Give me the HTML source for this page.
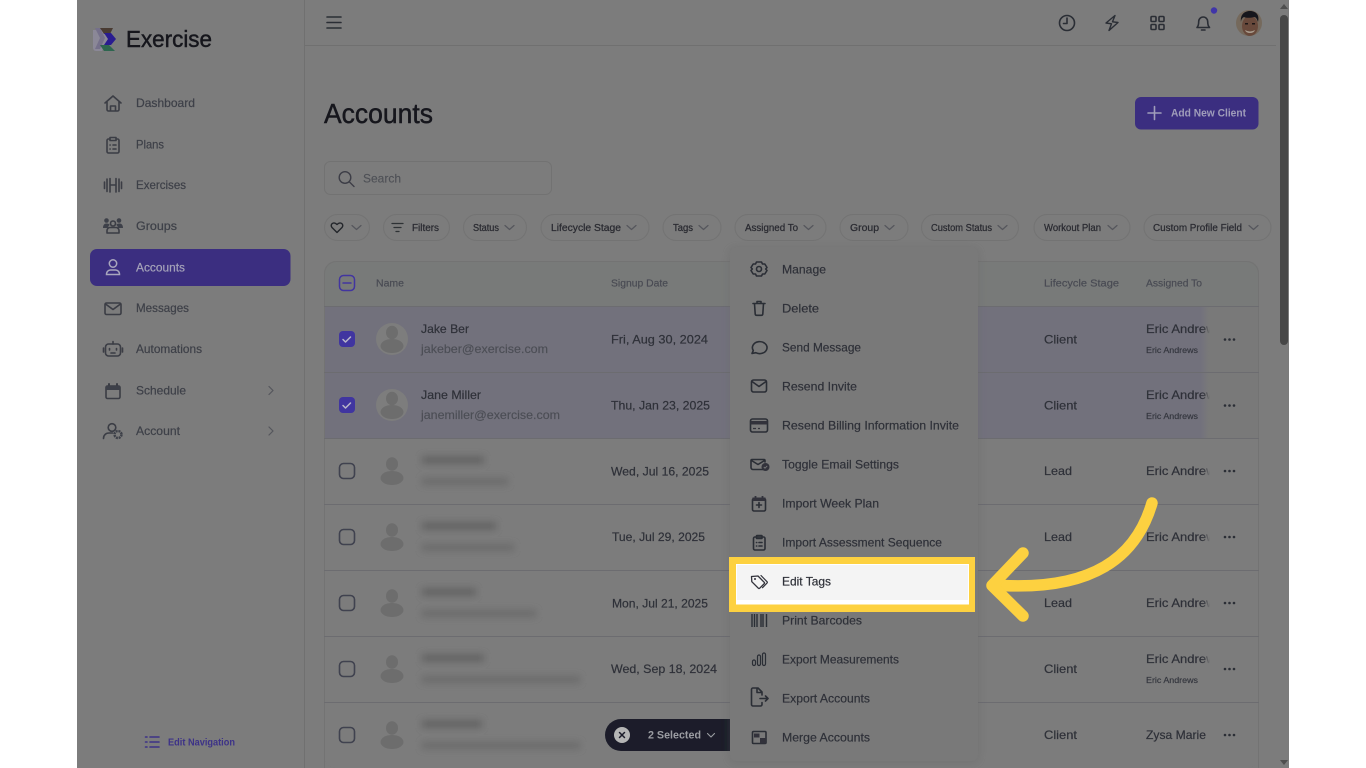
<!DOCTYPE html>
<html lang="en"><head><meta charset="utf-8"><title>Accounts</title>
<style>
html,body{margin:0;padding:0;background:#fff;width:1366px;height:768px;overflow:hidden}
svg{display:block;position:absolute;left:0;top:0}
text{font-family:"Liberation Sans",sans-serif}
.nav{font-size:12px;fill:#3e4048;stroke:#3e4048;stroke-width:.2}
.m{font-size:12px;fill:#2e3038;stroke:#2e3038;stroke-width:.2}
.c{font-size:10px;fill:#2a2b31;stroke:#2a2b31;stroke-width:.25}
.h{font-size:10.5px;fill:#494b53;stroke:#494b53;stroke-width:.2}
.t{font-size:12px;fill:#2e3038;stroke:#2e3038;stroke-width:.2}
.e{font-size:12px;fill:#4c4e55;stroke:#4c4e55;stroke-width:.15}
.s{font-size:8.5px;fill:#33353d;stroke:#33353d;stroke-width:.15}
.i{fill:none;stroke:#2b2d35;stroke-width:1.6;stroke-linecap:round;stroke-linejoin:round}
.n{fill:none;stroke:#3a3c44;stroke-width:1.6;stroke-linecap:round;stroke-linejoin:round}
.g{fill:none;stroke:#55565c;stroke-width:1.2;stroke-linecap:round;stroke-linejoin:round}
.chip{fill:#7b7b7b;stroke:#737373;stroke-width:1}
.sep{stroke:#707070;stroke-width:1}
.cb{fill:none;stroke:#3f424f;stroke-width:1.6}
.av{fill:#7d7d7d}
.p{fill:#6d6d6d}
</style></head>
<body>
<svg width="1366" height="768" viewBox="0 0 1366 768" xmlns="http://www.w3.org/2000/svg">
<defs>
<filter id="soft" x="-2%" y="-2%" width="104%" height="104%"><feGaussianBlur stdDeviation="0.35"/></filter>
<filter id="bl" x="-20%" y="-100%" width="140%" height="300%"><feGaussianBlur stdDeviation="3.5"/></filter>
<filter id="sh" x="-10%" y="-10%" width="120%" height="120%"><feGaussianBlur stdDeviation="4"/></filter>
<linearGradient id="fadeS" x1="0" x2="1" y1="0" y2="0"><stop offset="0" stop-color="#797979" stop-opacity="0"/><stop offset="1" stop-color="#797979"/></linearGradient>
<linearGradient id="fadeN" x1="0" x2="1" y1="0" y2="0"><stop offset="0" stop-color="#7b7b7b" stop-opacity="0"/><stop offset="1" stop-color="#7b7b7b"/></linearGradient>
<clipPath id="tb"><rect x="324" y="261" width="935" height="507" rx="12"/></clipPath>
<clipPath id="ac"><circle cx="1249" cy="23" r="13"/></clipPath>
</defs>
<rect width="1366" height="768" fill="#fff"/>
<g filter="url(#soft)">
<rect x="77" y="0" width="1212" height="768" fill="#7b7b7b"/>
<rect x="304" y="0" width="1" height="768" fill="#707070"/>
<rect x="305" y="45" width="971" height="1" fill="#707070"/>

<!-- scrollbar -->
<rect x="1276" y="0" width="13" height="768" fill="#7c7c7c"/>
<rect x="1280" y="15" width="8" height="330" rx="4" fill="#474747"/>
<path d="M1280 9l4-5 4 5z" fill="#4f4f4f"/>
<path d="M1280 760l4 5 4-5z" fill="#4f4f4f"/>

<!-- logo -->
<g>
<path d="M93 30h9l6 9-6 12h-6a3 3 0 0 1-3-3z" fill="#8b8897"/>
<path d="M95 28h5l5 10-5 11h-5l5-11z" fill="#74708a"/>
<path d="M100 28h13l-3 6h-6z" fill="#4a3a33"/>
<path d="M104 33h7l5 6-5 6h-7l4-6z" fill="#2a1f90"/>
<path d="M100 45h9l6 6h-11z" fill="#2f6650"/>
</g>
<text x="126" y="47" font-size="23" fill="#14151b" stroke="#14151b" stroke-width=".45" textLength="86" lengthAdjust="spacingAndGlyphs">Exercise</text>

<!-- nav -->
<rect x="90" y="249" width="200.500" height="37" rx="7" fill="#3a2f80"/>
<g class="n">
<path d="M105 103l8-7 8 7M107 101.500v8a1.500 1.500 0 0 0 1.500 1.500h9a1.500 1.500 0 0 0 1.500-1.500v-8M110.500 111v-5h5v5"/>
<path d="M109 139h-.500a1.500 1.500 0 0 0-1.500 1.500v11a1.500 1.500 0 0 0 1.500 1.500h9a1.500 1.500 0 0 0 1.500-1.500v-11a1.500 1.500 0 0 0-1.500-1.500H117M110 137.500h6v3h-6zM110 145h.2M113 145h3M110 149h.2M113 149h3"/>
<path d="M104.500 182v6.500M107 179v12.500M110 178.500v13.500M110 185h6M116 178.500v13.500M119 179v12.500M121.500 182v6.500"/>
<path d="M107 233h12v-2.500a3 3 0 0 0-3-3h-6a3 3 0 0 0-3 3z"/>
<circle cx="113" cy="223.500" r="2.500"/>
</g>
<g fill="#3e4048"><circle cx="106.500" cy="220.500" r="2.300"/><circle cx="119" cy="220.500" r="2.300"/><path d="M103 228c0-3 1.500-4.500 3.500-4.500s3 .8 3.200 1.500c-1.200.8-1.500 1.800-1.700 3zM123 228c0-3-1.500-4.500-3.500-4.500s-3 .8-3.200 1.500c1.200.8 1.500 1.800 1.700 3z"/></g>
<g fill="none" stroke="#a9a6bd" stroke-width="1.500"><circle cx="113" cy="263.500" r="3.700"/><path d="M106.500 274.500c0-3 2-4.500 4-4.500h5c2 0 4 1.500 4 4.500z"/></g>
<g class="n">
<rect x="105" y="303" width="16" height="11.500" rx="1.500"/><path d="M105.500 304l7.500 5.500 7.500-5.500"/>
<rect x="105.500" y="344" width="15" height="12" rx="3"/><path d="M113 344v-2.500M103.500 348v4M122.500 348v4"/><path d="M109.500 348.500v1.500M116.500 348.500v1.500M111 353h4"/>
<rect x="106" y="386" width="14" height="12.500" rx="1.500"/><path d="M109 384v3M117 384v3" stroke-width="2"/>
</g>
<rect x="106" y="386" width="14" height="4" fill="#3e4048"/>
<g class="n"><circle cx="112" cy="427.500" r="3.800"/><path d="M103.500 438.500c0-3.500 2.500-5.500 5.500-5.500h3.500"/></g>
<circle cx="118" cy="434.500" r="3.500" fill="none" stroke="#3e4048" stroke-width="2.400" stroke-dasharray="2 .8"/>
<text class="nav" x="136" y="107" textLength="59" lengthAdjust="spacingAndGlyphs">Dashboard</text>
<text class="nav" x="136" y="148.500" textLength="28" lengthAdjust="spacingAndGlyphs">Plans</text>
<text class="nav" x="136" y="189" textLength="50" lengthAdjust="spacingAndGlyphs">Exercises</text>
<text class="nav" x="136" y="230" textLength="41" lengthAdjust="spacingAndGlyphs">Groups</text>
<text class="nav" x="136" y="271.500" textLength="49" lengthAdjust="spacingAndGlyphs" style="fill:#a5a2b9;stroke:#a5a2b9">Accounts</text>
<text class="nav" x="136" y="312" textLength="53" lengthAdjust="spacingAndGlyphs">Messages</text>
<text class="nav" x="136" y="353" textLength="66" lengthAdjust="spacingAndGlyphs">Automations</text>
<text class="nav" x="136" y="394.500" textLength="50" lengthAdjust="spacingAndGlyphs">Schedule</text>
<text class="nav" x="136" y="435" textLength="44" lengthAdjust="spacingAndGlyphs">Account</text>
<path class="g" d="M269 386.500l4 4-4 4M269 427l4 4-4 4"/>
<g fill="none" stroke="#3d3388" stroke-width="1.600" stroke-linecap="round"><path d="M150 737h9M150 742h9M150 747h9M145.500 737h1.500M145.500 742h1.500M145.500 747h1.500"/></g>
<text x="168" y="745.500" font-size="10" font-weight="bold" fill="#3d3388" textLength="67" lengthAdjust="spacingAndGlyphs">Edit Navigation</text>

<!-- topbar -->
<path d="M327 17h14M327 22.500h14M327 28h14" fill="none" stroke="#2c2e36" stroke-width="1.600" stroke-linecap="round"/>
<g class="i">
<circle cx="1067" cy="23" r="7.500"/><path d="M1067 18v5.500h-3.500"/>
<path d="M1115 15.500L1106 23l5.500.8L1109 30.500l9-8-5.500-.7z" stroke-width="1.400"/>
<rect x="1151" y="16.500" width="5" height="5" rx="1"/><rect x="1159" y="16.500" width="5" height="5" rx="1"/><rect x="1151" y="24.500" width="5" height="5" rx="1"/><rect x="1159" y="24.500" width="5" height="5" rx="1"/>
<path d="M1197 27.500h12.500c-1.500-1.500-1.800-3-1.800-6a4.500 4.500 0 0 0-9 0c0 3-.3 4.500-1.700 6zM1201.500 30h3.500"/>
</g>
<circle cx="1214" cy="10.500" r="3.200" fill="#3f36a8"/>
<g clip-path="url(#ac)">
<rect x="1235" y="9" width="28" height="28" fill="#75695c"/>
<ellipse cx="1250" cy="26" rx="8" ry="10" fill="#67493a"/>
<path d="M1241 22c-1-8 4-11 9-11s10 3 8 11c-1-3-2-5-4-5-3 1-8 1-10 0-2 1-3 3-3 5z" fill="#17151a"/>
<path d="M1245 30q5 3 10 0-1 3-5 3t-5-3z" fill="#a99c8e"/>
<rect x="1245" y="23" width="3" height="1.500" fill="#1c1618"/><rect x="1252" y="23" width="3" height="1.500" fill="#1c1618"/>
</g>

<!-- title -->
<text x="324" y="123" font-size="28" fill="#15161d" stroke="#15161d" stroke-width=".45" textLength="109" lengthAdjust="spacingAndGlyphs">Accounts</text>
<rect x="1135" y="97" width="123.500" height="32.500" rx="6" fill="#3a2f80"/>
<path d="M1148 113h13M1154.500 106.500v13" stroke="#a09dba" stroke-width="1.600" stroke-linecap="round"/>
<text x="1171" y="116.500" font-size="11" font-weight="bold" fill="#a09dba" textLength="75" lengthAdjust="spacingAndGlyphs">Add New Client</text>

<!-- search -->
<rect x="324.500" y="161.500" width="227" height="33" rx="6" fill="#7c7c7c" stroke="#727272"/>
<circle cx="345" cy="177.500" r="5.800" fill="none" stroke="#3c3e46" stroke-width="1.400"/>
<path d="M349.500 182l4.500 4.500" stroke="#3c3e46" stroke-width="1.400" stroke-linecap="round"/>
<text x="363" y="182.500" font-size="12" fill="#4f5157" stroke="#4f5157" stroke-width=".15" textLength="38" lengthAdjust="spacingAndGlyphs">Search</text>

<!-- chips -->
<rect class="chip" x="324.500" y="214.500" width="45" height="26" rx="13"/>
<path d="M337 232.500l-5-5c-2.500-3 1.500-6.500 5-3 3.500-3.500 7.500 0 5 3z" fill="none" stroke="#24252b" stroke-width="1.400" stroke-linejoin="round"/>
<path class="g" d="M352 225.500l4.500 4 4.500-4"/>
<rect class="chip" x="383.500" y="214.500" width="66" height="26" rx="13"/>
<path d="M392 223.500h11M394 227.500h7M396 231.500h3" stroke="#2e3036" stroke-width="1.300" stroke-linecap="round"/>
<text class="c" x="412" y="231" textLength="27" lengthAdjust="spacingAndGlyphs">Filters</text>
<rect class="chip" x="463.500" y="214.500" width="63" height="26" rx="13"/>
<text class="c" x="473" y="231" textLength="26" lengthAdjust="spacingAndGlyphs">Status</text>
<path class="g" d="M505 225.500l4.500 4 4.500-4"/>
<rect class="chip" x="541" y="214.500" width="108" height="26" rx="13"/>
<text class="c" x="551" y="231" textLength="70" lengthAdjust="spacingAndGlyphs">Lifecycle Stage</text>
<path class="g" d="M627 225.500l4.500 4 4.500-4"/>
<rect class="chip" x="663" y="214.500" width="58" height="26" rx="13"/>
<text class="c" x="673" y="231" textLength="20" lengthAdjust="spacingAndGlyphs">Tags</text>
<path class="g" d="M699 225.500l4.500 4 4.500-4"/>
<rect class="chip" x="735" y="214.500" width="91" height="26" rx="13"/>
<text class="c" x="745" y="231" textLength="53" lengthAdjust="spacingAndGlyphs">Assigned To</text>
<path class="g" d="M804 225.500l4.500 4 4.500-4"/>
<rect class="chip" x="840" y="214.500" width="68" height="26" rx="13"/>
<text class="c" x="850" y="231" textLength="29" lengthAdjust="spacingAndGlyphs">Group</text>
<path class="g" d="M885 225.500l4.500 4 4.500-4"/>
<rect class="chip" x="921.500" y="214.500" width="97" height="26" rx="13"/>
<text class="c" x="931" y="231" textLength="61" lengthAdjust="spacingAndGlyphs">Custom Status</text>
<path class="g" d="M998 225.500l4.500 4 4.500-4"/>
<rect class="chip" x="1034" y="214.500" width="96" height="26" rx="13"/>
<text class="c" x="1044" y="231" textLength="57" lengthAdjust="spacingAndGlyphs">Workout Plan</text>
<path class="g" d="M1108 225.500l4.500 4 4.500-4"/>
<rect class="chip" x="1144" y="214.500" width="127" height="26" rx="13"/>
<text class="c" x="1153" y="231" textLength="89" lengthAdjust="spacingAndGlyphs">Custom Profile Field</text>
<path class="g" d="M1249 225.500l4.500 4 4.500-4"/>

<!-- table -->
<g clip-path="url(#tb)">
<rect x="324" y="261" width="935" height="507" fill="#7b7b7b"/>
<rect x="324" y="261" width="935" height="45" fill="#787a79"/>
<rect x="324" y="306" width="935" height="132" fill="#72717c"/>
<rect x="1200" y="306" width="12" height="132" fill="url(#fadeS)"/>
<rect x="1212" y="306" width="47" height="132" fill="#797979"/>
</g>
<rect x="324.500" y="261.500" width="934" height="520" rx="12" fill="none" stroke="#737373"/>

<!-- checkboxes -->
<rect x="339.500" y="275.500" width="15" height="15" rx="4" fill="none" stroke="#4334a0" stroke-width="1.500"/>
<path d="M343 283h8" stroke="#4334a0" stroke-width="1.500" stroke-linecap="round"/>
<rect x="339" y="331" width="16" height="16" rx="4" fill="#3f35a0"/>
<path d="M343 339.500l2.500 2.500 5-5" fill="none" stroke="#b9b7c9" stroke-width="1.500" stroke-linecap="round" stroke-linejoin="round"/>
<rect x="339" y="397" width="16" height="16" rx="4" fill="#3f35a0"/>
<path d="M343 405.500l2.500 2.500 5-5" fill="none" stroke="#b9b7c9" stroke-width="1.500" stroke-linecap="round" stroke-linejoin="round"/>
<rect class="cb" x="339.500" y="463.500" width="15" height="15" rx="4"/>
<rect class="cb" x="339.500" y="529.500" width="15" height="15" rx="4"/>
<rect class="cb" x="339.500" y="595.500" width="15" height="15" rx="4"/>
<rect class="cb" x="339.500" y="661.500" width="15" height="15" rx="4"/>
<rect class="cb" x="339.500" y="727.500" width="15" height="15" rx="4"/>

<!-- avatars -->
<circle class="av" cx="392" cy="339" r="16"/><ellipse class="p" cx="392" cy="332.500" rx="6" ry="6.800"/><ellipse class="p" cx="392" cy="346" rx="11.500" ry="7"/>
<circle class="av" cx="392" cy="405" r="16"/><ellipse class="p" cx="392" cy="398.500" rx="6" ry="6.800"/><ellipse class="p" cx="392" cy="412" rx="11.500" ry="7"/>
<ellipse class="p" cx="392" cy="464" rx="6" ry="6.800"/><ellipse class="p" cx="392" cy="478" rx="11.500" ry="7"/>
<ellipse class="p" cx="392" cy="530" rx="6" ry="6.800"/><ellipse class="p" cx="392" cy="544" rx="11.500" ry="7"/>
<ellipse class="p" cx="392" cy="596" rx="6" ry="6.800"/><ellipse class="p" cx="392" cy="610" rx="11.500" ry="7"/>
<ellipse class="p" cx="392" cy="662" rx="6" ry="6.800"/><ellipse class="p" cx="392" cy="676" rx="11.500" ry="7"/>
<ellipse class="p" cx="392" cy="728" rx="6" ry="6.800"/><ellipse class="p" cx="392" cy="742" rx="11.500" ry="7"/>

<!-- blurred names -->
<g fill="#656565" filter="url(#bl)">
<rect x="422" y="456" width="62" height="8"/><rect x="422" y="478" width="86" height="7" fill="#6c6c6c"/>
<rect x="422" y="522" width="74" height="8"/><rect x="422" y="544" width="92" height="7" fill="#6c6c6c"/>
<rect x="422" y="588" width="54" height="8"/><rect x="422" y="610" width="114" height="7" fill="#6c6c6c"/>
<rect x="422" y="654" width="62" height="8"/><rect x="422" y="676" width="158" height="7" fill="#6c6c6c"/>
<rect x="422" y="720" width="60" height="8"/><rect x="422" y="742" width="158" height="7" fill="#6c6c6c"/>
</g>

<!-- header text -->
<text class="h" x="376" y="286.500" textLength="28" lengthAdjust="spacingAndGlyphs">Name</text>
<text class="h" x="611" y="286.500" textLength="57" lengthAdjust="spacingAndGlyphs">Signup Date</text>
<text class="h" x="1044" y="286.500" textLength="75" lengthAdjust="spacingAndGlyphs">Lifecycle Stage</text>
<text class="h" x="1146" y="286.500" textLength="56" lengthAdjust="spacingAndGlyphs">Assigned To</text>

<!-- row text -->
<text class="t" x="421" y="333" textLength="48" lengthAdjust="spacingAndGlyphs">Jake Ber</text>
<text class="e" x="421" y="353" textLength="127" lengthAdjust="spacingAndGlyphs">jakeber@exercise.com</text>
<text class="t" x="421" y="399" textLength="60" lengthAdjust="spacingAndGlyphs">Jane Miller</text>
<text class="e" x="421" y="419" textLength="139" lengthAdjust="spacingAndGlyphs">janemiller@exercise.com</text>
<text class="t" x="611" y="343.500" textLength="97" lengthAdjust="spacingAndGlyphs">Fri, Aug 30, 2024</text>
<text class="t" x="611" y="409.500" textLength="99" lengthAdjust="spacingAndGlyphs">Thu, Jan 23, 2025</text>
<text class="t" x="611" y="475.500" textLength="98" lengthAdjust="spacingAndGlyphs">Wed, Jul 16, 2025</text>
<text class="t" x="612" y="541" textLength="93" lengthAdjust="spacingAndGlyphs">Tue, Jul 29, 2025</text>
<text class="t" x="612" y="607.500" textLength="96" lengthAdjust="spacingAndGlyphs">Mon, Jul 21, 2025</text>
<text class="t" x="611" y="673" textLength="106" lengthAdjust="spacingAndGlyphs">Wed, Sep 18, 2024</text>

<text class="t" x="1044" y="343.500" textLength="33" lengthAdjust="spacingAndGlyphs">Client</text>
<text class="t" x="1044" y="409.500" textLength="33" lengthAdjust="spacingAndGlyphs">Client</text>
<text class="t" x="1044" y="475" textLength="28" lengthAdjust="spacingAndGlyphs">Lead</text>
<text class="t" x="1044" y="541" textLength="28" lengthAdjust="spacingAndGlyphs">Lead</text>
<text class="t" x="1044" y="607" textLength="28" lengthAdjust="spacingAndGlyphs">Lead</text>
<text class="t" x="1044" y="673" textLength="33" lengthAdjust="spacingAndGlyphs">Client</text>
<text class="t" x="1044" y="739" textLength="33" lengthAdjust="spacingAndGlyphs">Client</text>

<text class="t" x="1146" y="333" textLength="76" lengthAdjust="spacingAndGlyphs">Eric Andrews</text>
<text class="s" x="1146" y="353" textLength="52" lengthAdjust="spacingAndGlyphs">Eric Andrews</text>
<text class="t" x="1146" y="399" textLength="76" lengthAdjust="spacingAndGlyphs">Eric Andrews</text>
<text class="s" x="1146" y="419" textLength="52" lengthAdjust="spacingAndGlyphs">Eric Andrews</text>
<text class="t" x="1146" y="475" textLength="76" lengthAdjust="spacingAndGlyphs">Eric Andrews</text>
<text class="t" x="1146" y="541" textLength="76" lengthAdjust="spacingAndGlyphs">Eric Andrews</text>
<text class="t" x="1146" y="607" textLength="76" lengthAdjust="spacingAndGlyphs">Eric Andrews</text>
<text class="t" x="1146" y="663" textLength="76" lengthAdjust="spacingAndGlyphs">Eric Andrews</text>
<text class="s" x="1146" y="683" textLength="52" lengthAdjust="spacingAndGlyphs">Eric Andrews</text>
<text class="t" x="1146" y="739" textLength="60" lengthAdjust="spacingAndGlyphs">Zysa Marie</text>
<rect x="1203" y="307" width="7" height="131" fill="url(#fadeS)"/>
<rect x="1210" y="307" width="14" height="131" fill="#797979"/>
<rect x="1203" y="439" width="7" height="65" fill="url(#fadeN)"/><rect x="1210" y="439" width="14" height="65" fill="#7b7b7b"/>
<rect x="1203" y="505" width="7" height="65" fill="url(#fadeN)"/><rect x="1210" y="505" width="14" height="65" fill="#7b7b7b"/>
<rect x="1203" y="571" width="7" height="65" fill="url(#fadeN)"/><rect x="1210" y="571" width="14" height="65" fill="#7b7b7b"/>
<rect x="1203" y="637" width="7" height="65" fill="url(#fadeN)"/><rect x="1210" y="637" width="14" height="65" fill="#7b7b7b"/>
<path class="sep" d="M324 306.500h935M324 372.500h935M324 438.500h935M324 504.500h935M324 570.500h935M324 636.500h935M324 702.500h935" style="stroke:#6c6c70"/>
<g fill="#2c2e36">
<circle cx="1225" cy="339.500" r="1.300"/><circle cx="1229.500" cy="339.500" r="1.300"/><circle cx="1234" cy="339.500" r="1.300"/>
<circle cx="1225" cy="405.500" r="1.300"/><circle cx="1229.500" cy="405.500" r="1.300"/><circle cx="1234" cy="405.500" r="1.300"/>
<circle cx="1225" cy="471" r="1.300"/><circle cx="1229.500" cy="471" r="1.300"/><circle cx="1234" cy="471" r="1.300"/>
<circle cx="1225" cy="537" r="1.300"/><circle cx="1229.500" cy="537" r="1.300"/><circle cx="1234" cy="537" r="1.300"/>
<circle cx="1225" cy="603" r="1.300"/><circle cx="1229.500" cy="603" r="1.300"/><circle cx="1234" cy="603" r="1.300"/>
<circle cx="1225" cy="669" r="1.300"/><circle cx="1229.500" cy="669" r="1.300"/><circle cx="1234" cy="669" r="1.300"/>
<circle cx="1225" cy="735" r="1.300"/><circle cx="1229.500" cy="735" r="1.300"/><circle cx="1234" cy="735" r="1.300"/>
</g>

<!-- selected bar -->
<path d="M621 719h120v32H621a16 16 0 0 1 0-32z" fill="#1b1e29"/>
<circle cx="622" cy="735" r="8" fill="#b5b5b5"/>
<path d="M619.500 732.500l5 5M624.500 732.500l-5 5" stroke="#1b1e29" stroke-width="1.500" stroke-linecap="round"/>
<text x="648" y="738.500" font-size="11" font-weight="bold" fill="#9b9ca2" textLength="53" lengthAdjust="spacingAndGlyphs">2 Selected</text>
<path d="M707.500 733.500l3.500 3.500 3.500-3.500" fill="none" stroke="#9b9ca2" stroke-width="1.100" stroke-linecap="round" stroke-linejoin="round"/>

<!-- menu -->
<rect x="730" y="249" width="248" height="513" rx="7" fill="#606060" opacity=".35" filter="url(#sh)"/>
<rect x="730" y="247" width="248" height="514" rx="6" fill="#797979"/>
<g class="i">
<circle cx="759" cy="269" r="2.500"/><path d="M756.500 262h5l1 2 2.300 0 2.200 3.500-1.300 1.500 1.300 1.500-2.200 3.500-2.300 0-1 2h-5l-1-2-2.300 0-2.200-3.500 1.300-1.500-1.300-1.500 2.200-3.500 2.300 0z"/>
<path d="M753 303.500h12M757 303.500v-2h4v2M754.500 303.500l.7 10.500a1.500 1.500 0 0 0 1.500 1.300h4.600a1.500 1.500 0 0 0 1.500-1.300l.7-10.500"/>
<path d="M752 353.500l1.300-3a7.300 6 0 1 1 2.500 2.200z"/>
<rect x="751.500" y="380" width="15" height="12" rx="2"/><path d="M752 381.500l7 5 7-5"/>
<rect x="750.500" y="419" width="17" height="13" rx="2"/>
</g>
<rect x="750.500" y="421" width="17" height="3.500" fill="#30323b"/>
<path d="M753 428.500h3M758 428.500h2" stroke="#30323b" stroke-width="1.300"/>
<g class="i">
<path d="M764 469.500h-11a2 2 0 0 1-2-2v-7a1 1 0 0 1 1-1h12a1 1 0 0 1 1 1v1.500M751.500 460.500l6.500 4 6.500-4"/>
<rect x="752.500" y="498.500" width="13" height="12.500" rx="1.500"/><path d="M759 502.500v5M756.500 505h5"/>
<rect x="753.500" y="537" width="11.500" height="13" rx="1.500"/><rect x="756.500" y="535.500" width="5.500" height="3" rx=".5"/><path d="M756.500 542.500h.2M759 542.500h3M756.500 546h.2M759 546h3"/>
</g>
<circle cx="765.500" cy="467" r="4" fill="#30323b"/>
<path d="M763.800 467l1.200 1.200 2.200-2.300" fill="none" stroke="#797979" stroke-width=".9"/>
<rect x="752.500" y="497.500" width="13" height="3.500" fill="#30323b"/><path d="M755.500 496v2M762.500 496v2" stroke="#30323b" stroke-width="1.800"/>

<!-- arrow -->
<path d="M1152 503C1136 558 1092 590 1002 585.500" fill="none" stroke="#fdd13f" stroke-width="11.500" stroke-linecap="round"/>
<path d="M1023 553L992 585.500 1023 616" fill="none" stroke="#fdd13f" stroke-width="11.500" stroke-linecap="round" stroke-linejoin="round"/>

<!-- highlight -->
<rect x="729" y="557" width="246" height="55" fill="#fdd13f"/>
<rect x="736" y="564" width="233" height="40.500" fill="#fff"/>
<rect x="737" y="565" width="231" height="35" fill="#f4f4f4"/>
<path d="M751.500 576.500l.3 5.200 6.500 6.500a1 1 0 0 0 1.400 0l4.500-4.500a1 1 0 0 0 0-1.400l-6.200-6.300z" fill="none" stroke="#30323b" stroke-width="1.300" stroke-linejoin="round"/>
<path d="M761 575.500l6 6.200a1 1 0 0 1 0 1.400l-4.500 4.600" fill="none" stroke="#30323b" stroke-width="1.200" stroke-linecap="round"/>
<circle cx="755" cy="579" r="1" fill="#30323b"/>

<g class="i">
<path d="M752 614v13M754.500 614v13M757 614v13M761 614v13M763 614v13M766.500 614v13" stroke-width="1.400" stroke-linecap="butt"/>
<rect x="752.500" y="660" width="3" height="5.500" rx="1.500" stroke-width="1.200"/><rect x="757.500" y="655" width="3" height="10.500" rx="1.500" stroke-width="1.200"/><rect x="762.500" y="653" width="3" height="12.500" rx="1.500" stroke-width="1.200"/>
<path d="M762 695v-3l-4-4h-5a1.500 1.500 0 0 0-1.500 1.500v15a1.500 1.500 0 0 0 1.500 1.500h7.500a1.500 1.500 0 0 0 1.500-1.500v-2M757 688v4.500h5M760 698.500h8M765.500 696l2.500 2.500-2.500 2.500"/>
<rect x="752.500" y="731.500" width="13.500" height="12" rx="1"/>
</g>
<rect x="760" y="738" width="6" height="5.500" fill="#30323b"/><rect x="754" y="733.500" width="5.500" height="4" fill="#30323b"/>

<text class="m" x="782" y="273.500" textLength="44" lengthAdjust="spacingAndGlyphs">Manage</text>
<text class="m" x="782" y="312.500" textLength="37" lengthAdjust="spacingAndGlyphs">Delete</text>
<text class="m" x="782" y="351.500" textLength="79" lengthAdjust="spacingAndGlyphs">Send Message</text>
<text class="m" x="782" y="390.500" textLength="75" lengthAdjust="spacingAndGlyphs">Resend Invite</text>
<text class="m" x="782" y="429.500" textLength="177" lengthAdjust="spacingAndGlyphs">Resend Billing Information Invite</text>
<text class="m" x="782" y="468.500" textLength="117" lengthAdjust="spacingAndGlyphs">Toggle Email Settings</text>
<text class="m" x="782" y="507.500" textLength="97" lengthAdjust="spacingAndGlyphs">Import Week Plan</text>
<text class="m" x="782" y="546.500" textLength="160" lengthAdjust="spacingAndGlyphs">Import Assessment Sequence</text>
<text class="m" x="782" y="585.500" textLength="49" lengthAdjust="spacingAndGlyphs">Edit Tags</text>
<text class="m" x="782" y="624.500" textLength="80" lengthAdjust="spacingAndGlyphs">Print Barcodes</text>
<text class="m" x="782" y="663.500" textLength="117" lengthAdjust="spacingAndGlyphs">Export Measurements</text>
<text class="m" x="782" y="702.500" textLength="88" lengthAdjust="spacingAndGlyphs">Export Accounts</text>
<text class="m" x="782" y="741.500" textLength="88" lengthAdjust="spacingAndGlyphs">Merge Accounts</text>
</g>
</svg>
</body></html>
